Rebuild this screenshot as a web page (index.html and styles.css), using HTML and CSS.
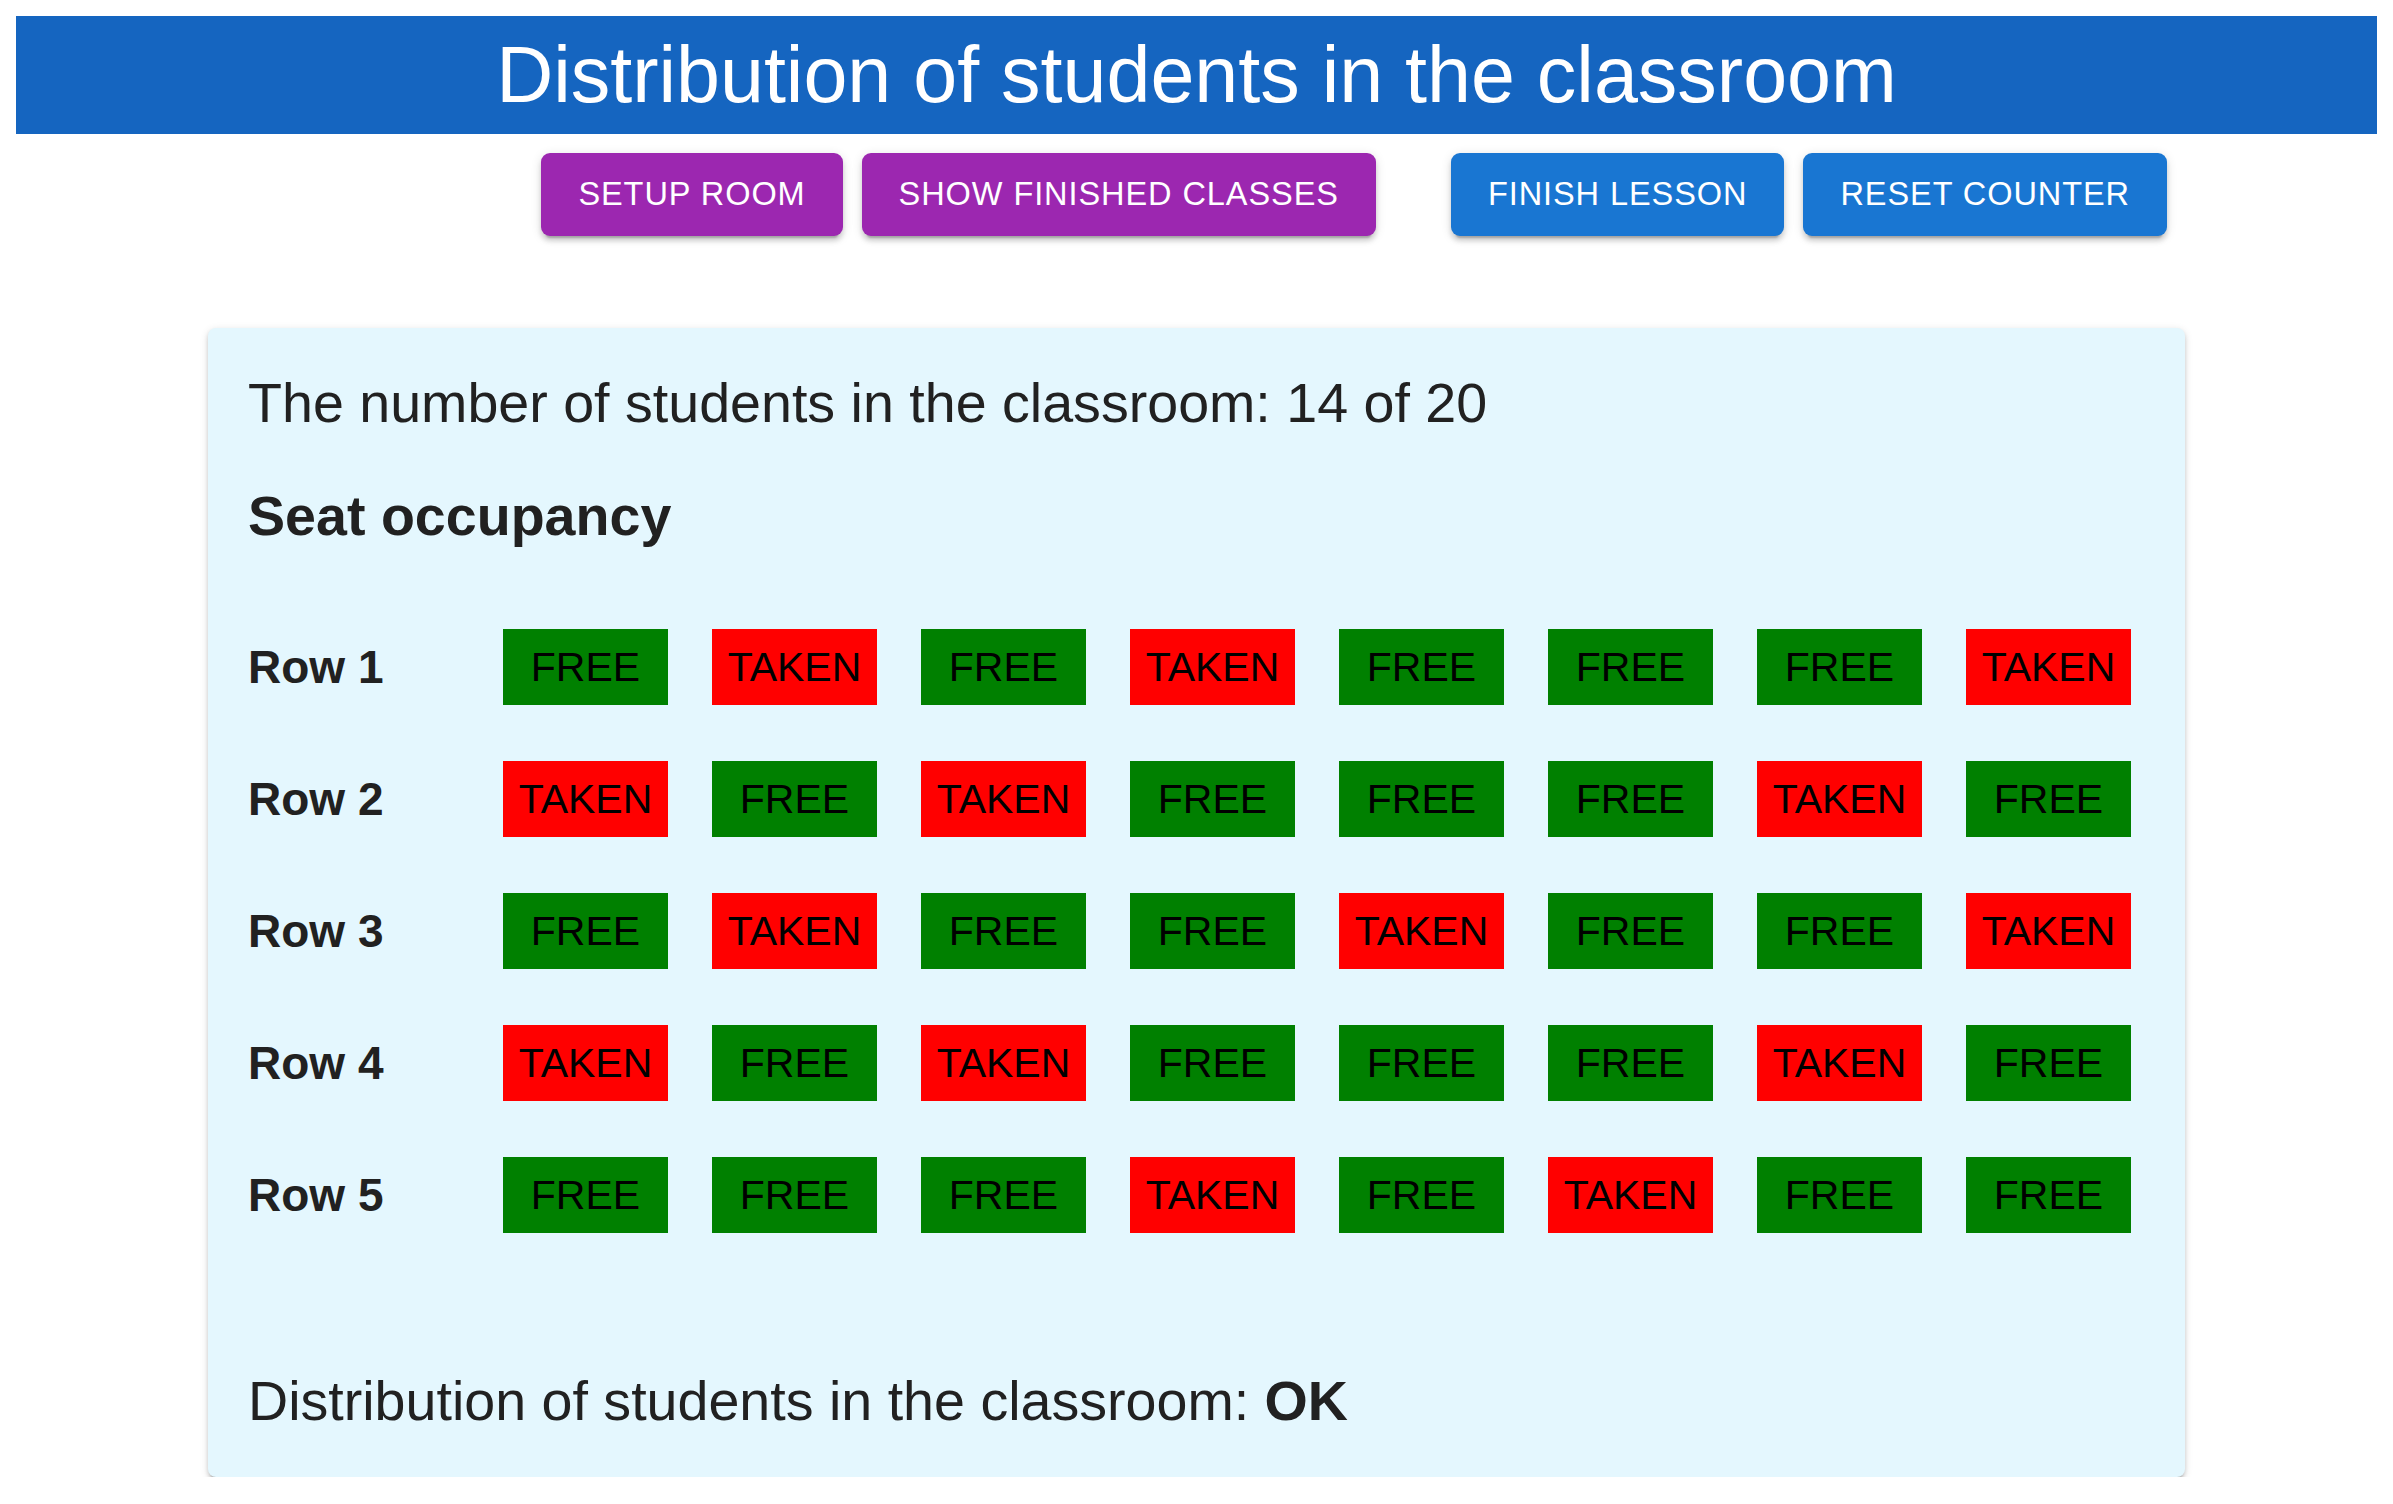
FILE: index.html
```html
<!DOCTYPE html>
<html lang="en">
<head>
<meta charset="utf-8">
<title>Distribution of students in the classroom</title>
<link rel="stylesheet" href="styles.css">
</head>
<body>
<header class="app-bar">
  <h1 class="app-title">Distribution of students in the classroom</h1>
</header>
<nav class="toolbar">
  <button class="btn btn-purple">SETUP ROOM</button>
  <button class="btn btn-purple">SHOW FINISHED CLASSES</button>
  <button class="btn btn-blue btn-sep">FINISH LESSON</button>
  <button class="btn btn-blue">RESET COUNTER</button>
</nav>
<main class="card">
  <p class="count">The number of students in the classroom: 14 of 20</p>
  <h2 class="section-title">Seat occupancy</h2>
  <div class="rows">
    <div class="row">
      <span class="row-label">Row 1</span>
      <div class="seats">
        <span class="seat free">FREE</span><span class="seat taken">TAKEN</span><span class="seat free">FREE</span><span class="seat taken">TAKEN</span><span class="seat free">FREE</span><span class="seat free">FREE</span><span class="seat free">FREE</span><span class="seat taken">TAKEN</span>
      </div>
    </div>
    <div class="row">
      <span class="row-label">Row 2</span>
      <div class="seats">
        <span class="seat taken">TAKEN</span><span class="seat free">FREE</span><span class="seat taken">TAKEN</span><span class="seat free">FREE</span><span class="seat free">FREE</span><span class="seat free">FREE</span><span class="seat taken">TAKEN</span><span class="seat free">FREE</span>
      </div>
    </div>
    <div class="row">
      <span class="row-label">Row 3</span>
      <div class="seats">
        <span class="seat free">FREE</span><span class="seat taken">TAKEN</span><span class="seat free">FREE</span><span class="seat free">FREE</span><span class="seat taken">TAKEN</span><span class="seat free">FREE</span><span class="seat free">FREE</span><span class="seat taken">TAKEN</span>
      </div>
    </div>
    <div class="row">
      <span class="row-label">Row 4</span>
      <div class="seats">
        <span class="seat taken">TAKEN</span><span class="seat free">FREE</span><span class="seat taken">TAKEN</span><span class="seat free">FREE</span><span class="seat free">FREE</span><span class="seat free">FREE</span><span class="seat taken">TAKEN</span><span class="seat free">FREE</span>
      </div>
    </div>
    <div class="row">
      <span class="row-label">Row 5</span>
      <div class="seats">
        <span class="seat free">FREE</span><span class="seat free">FREE</span><span class="seat free">FREE</span><span class="seat taken">TAKEN</span><span class="seat free">FREE</span><span class="seat taken">TAKEN</span><span class="seat free">FREE</span><span class="seat free">FREE</span>
      </div>
    </div>
  </div>
  <p class="status">Distribution of students in the classroom: <strong>OK</strong></p>
</main>
</body>
</html>
```
FILE: styles.css
```css
* { box-sizing: border-box; }

body {
  margin: 16px;
  background: #ffffff;
  font-family: "Liberation Sans", Arial, Helvetica, sans-serif;
  color: rgba(0, 0, 0, 0.87);
}

.app-bar {
  height: 118px;
  background: #1565c0;
  display: flex;
  align-items: center;
  justify-content: center;
}

.app-title {
  margin: 0;
  font-size: 79px;
  font-weight: 400;
  line-height: 118px;
  color: #ffffff;
}

.toolbar {
  width: 1977px;
  margin: 19px auto 0;
  padding-right: 18px;
  display: flex;
  justify-content: flex-end;
  gap: 19px;
}

.btn {
  height: 83px;
  padding: 0 37px;
  border: none;
  border-radius: 9px;
  font-family: "Liberation Sans", Arial, sans-serif;
  font-size: 32.5px;
  font-weight: 400;
  letter-spacing: 0.93px;
  color: #ffffff;
  box-shadow: 0 7px 2px -5px rgba(0, 0, 0, 0.2), 0 5px 5px 0 rgba(0, 0, 0, 0.14), 0 2px 11px 0 rgba(0, 0, 0, 0.12);
  cursor: pointer;
}

.btn-purple { background: #9c27b0; }
.btn-blue { background: #1976d2; }
.btn-sep { margin-left: 56px; }

.card {
  display: block;
  width: 1977px;
  margin: 92px auto 0;
  padding: 38px 40px 39px;
  background: #e4f7fe;
  border-radius: 8px;
  box-shadow: 0 5px 3px -3px rgba(0, 0, 0, 0.22), 0 3px 4px 0 rgba(0, 0, 0, 0.14), 0 2px 8px 0 rgba(0, 0, 0, 0.12);
}

.count,
.section-title,
.status {
  margin: 0;
  font-size: 55.6px;
  line-height: 74px;
  color: #212121;
}

.count { font-weight: 400; }

.section-title {
  margin-top: 39px;
  font-weight: 700;
}

.rows {
  margin-top: 76px;
  display: flex;
  flex-direction: column;
  gap: 56px;
}

.row {
  display: flex;
  align-items: center;
}

.row-label {
  width: 255px;
  flex: none;
  font-size: 46px;
  font-weight: 700;
  color: #212121;
}

.seats {
  display: flex;
  gap: 44px;
}

.seat {
  width: 165px;
  height: 76px;
  display: flex;
  align-items: center;
  justify-content: center;
  font-size: 41px;
  color: #000000;
}

.free { background: #008000; }
.taken { background: #ff0000; }

.status {
  margin-top: 131px;
  font-weight: 400;
}

.status strong { font-weight: 700; }
```
